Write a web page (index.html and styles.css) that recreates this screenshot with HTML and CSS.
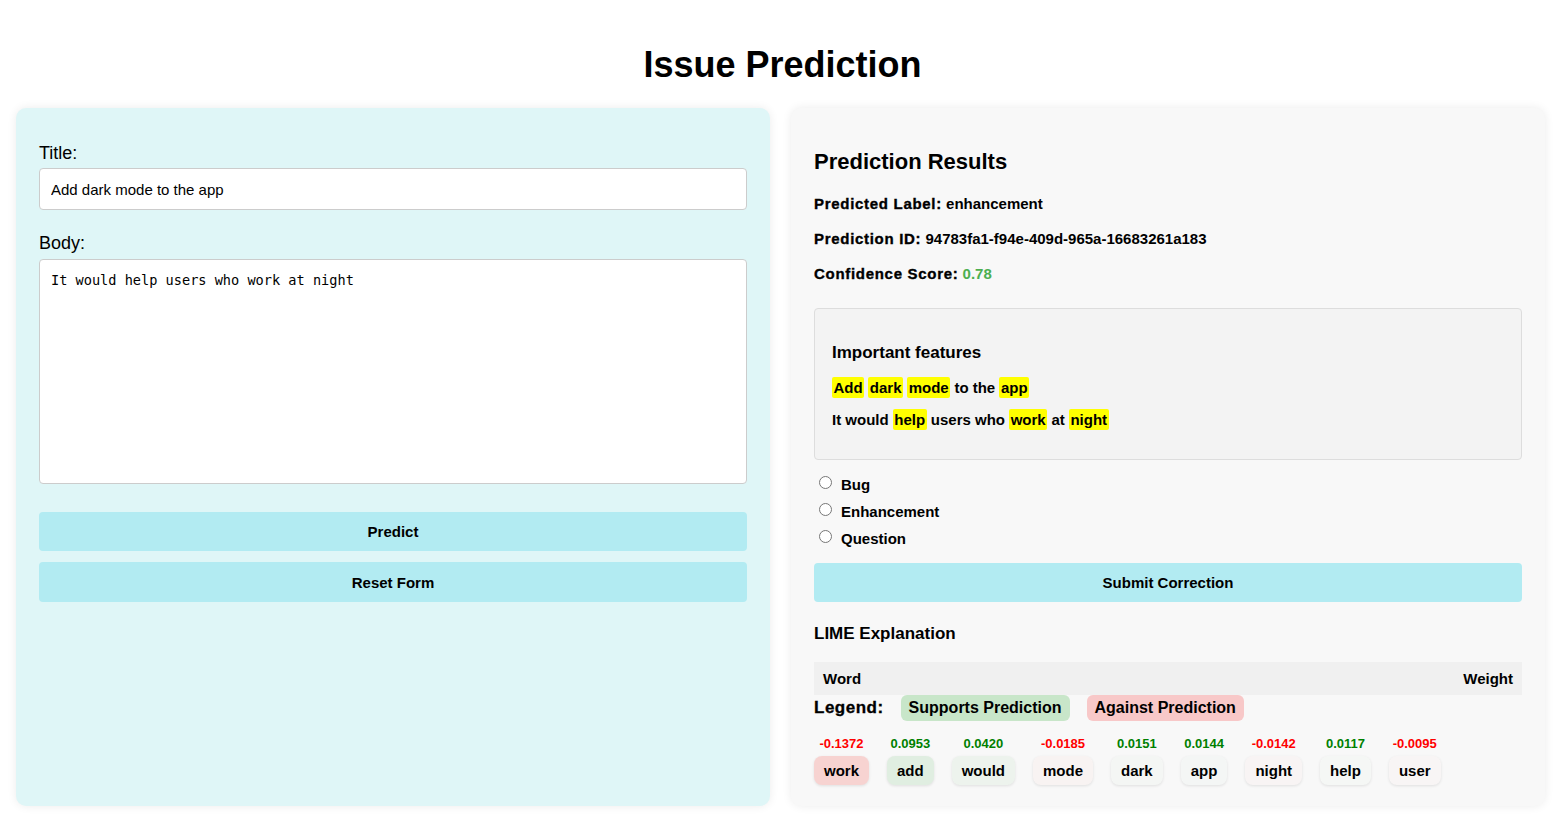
FILE: index.html
```html
<!DOCTYPE html>
<html lang="en">
<head>
<meta charset="utf-8">
<title>Issue Prediction</title>
<link rel="stylesheet" href="styles.css">
</head>
<body>
<h1 class="page-title">Issue Prediction</h1>
<div class="layout">
  <section class="panel panel-form">
    <label class="field-label" for="title">Title:</label>
    <input class="text-input" id="title" type="text" value="Add dark mode to the app">
    <label class="field-label field-label-body" for="body">Body:</label>
    <textarea class="text-area" id="body">It would help users who work at night</textarea>
    <button class="btn btn-predict" type="button">Predict</button>
    <button class="btn btn-reset" type="button">Reset Form</button>
  </section>

  <section class="panel panel-results">
    <h2 class="results-title">Prediction Results</h2>
    <p class="result-line"><strong>Predicted Label:</strong> enhancement</p>
    <p class="result-line"><strong>Prediction ID:</strong> 94783fa1-f94e-409d-965a-16683261a183</p>
    <p class="result-line"><strong>Confidence Score:</strong> <span class="score">0.78</span></p>

    <div class="features">
      <h3 class="features-title">Important features</h3>
      <div class="features-line"><span class="hl">Add</span> <span class="hl">dark</span> <span class="hl">mode</span> to the <span class="hl">app</span></div>
      <div class="features-line features-line-last">It would <span class="hl">help</span> users who <span class="hl">work</span> at <span class="hl">night</span></div>
    </div>

    <div class="radios">
      <label class="radio-row"><input type="radio" name="label" class="radio"> Bug</label>
      <label class="radio-row"><input type="radio" name="label" class="radio"> Enhancement</label>
      <label class="radio-row"><input type="radio" name="label" class="radio"> Question</label>
    </div>

    <button class="btn btn-submit" type="button">Submit Correction</button>

    <h3 class="lime-title">LIME Explanation</h3>
    <div class="lime-header">
      <span>Word</span>
      <span>Weight</span>
    </div>
    <div class="legend">
      <span class="legend-label">Legend:</span>
      <span class="legend-chip legend-support">Supports Prediction</span>
      <span class="legend-chip legend-against">Against Prediction</span>
    </div>

    <div class="words">
      <div class="word"><span class="weight neg">-0.1372</span><span class="word-chip" style="background: rgba(244,67,54,0.2)">work</span></div>
      <div class="word"><span class="weight pos">0.0953</span><span class="word-chip" style="background: rgba(76,175,80,0.139)">add</span></div>
      <div class="word"><span class="weight pos">0.0420</span><span class="word-chip" style="background: rgba(76,175,80,0.061)">would</span></div>
      <div class="word"><span class="weight neg">-0.0185</span><span class="word-chip" style="background: rgba(244,67,54,0.027)">mode</span></div>
      <div class="word"><span class="weight pos">0.0151</span><span class="word-chip" style="background: rgba(76,175,80,0.022)">dark</span></div>
      <div class="word"><span class="weight pos">0.0144</span><span class="word-chip" style="background: rgba(76,175,80,0.021)">app</span></div>
      <div class="word"><span class="weight neg">-0.0142</span><span class="word-chip" style="background: rgba(244,67,54,0.021)">night</span></div>
      <div class="word"><span class="weight pos">0.0117</span><span class="word-chip" style="background: rgba(76,175,80,0.017)">help</span></div>
      <div class="word"><span class="weight neg">-0.0095</span><span class="word-chip" style="background: rgba(244,67,54,0.014)">user</span></div>
    </div>
  </section>
</div>
</body>
</html>
```

FILE: styles.css
```css
* { box-sizing: border-box; }

html, body {
  margin: 0;
  padding: 0;
  background: #ffffff;
  font-family: "Liberation Sans", Arial, sans-serif;
  color: #000;
}

.page-title {
  margin: 44px 0 22px;
  text-align: center;
  font-size: 36px;
  font-weight: bold;
  line-height: 42px;
}

.layout {
  display: grid;
  grid-template-columns: 1fr 1fr;
  gap: 21px;
  padding: 0 20px 0 16px;
  margin-bottom: 19px;
}

.panel {
  border-radius: 10px;
  box-shadow: 0 0 10px rgba(0, 0, 0, 0.08);
}

.panel-form {
  background: #dff6f7;
  padding: 35px 23px 23px;
  display: flex;
  flex-direction: column;
}

.field-label {
  display: block;
  font-size: 18px;
  line-height: 21px;
  margin-bottom: 4px;
}

.field-label-body {
  margin-top: 23px;
  margin-bottom: 5px;
}

.text-input {
  display: block;
  width: 100%;
  height: 42px;
  padding: 0 11px;
  border: 1px solid #ccc;
  border-radius: 4px;
  background: #fff;
  font-family: "Liberation Sans", Arial, sans-serif;
  font-size: 15px;
  color: #000;
}

.text-area {
  display: block;
  width: 100%;
  height: 225px;
  padding: 12px 11px;
  border: 1px solid #ccc;
  border-radius: 4px;
  background: #fff;
  font-family: "DejaVu Sans Mono", monospace;
  font-size: 13.6px;
  line-height: 17px;
  color: #000;
  resize: none;
}

.btn {
  display: block;
  width: 100%;
  border: none;
  border-radius: 4px;
  background: #b2ebf2;
  font-family: "Liberation Sans", Arial, sans-serif;
  font-size: 15px;
  font-weight: bold;
  color: #000;
  cursor: pointer;
}

.btn-predict {
  margin-top: 28px;
  height: 39px;
}

.btn-reset {
  margin-top: 11px;
  height: 40px;
}

.panel-results {
  background: #f8f8f8;
  padding: 25px 23px 21px 23px;
  font-weight: bold;
}

.results-title {
  margin: 16px 0 21px;
  font-size: 22px;
  line-height: 25px;
}

.result-line {
  margin: 18px 0;
  font-size: 15px;
  line-height: 17px;
}

.result-line strong {
  font-weight: 900;
  letter-spacing: 0.7px;
  -webkit-text-stroke: 0.35px #000;
}

.score {
  color: #4caf50;
}

.features {
  margin-top: 26px;
  background: #f3f3f3;
  border: 1px solid #ddd;
  border-radius: 4px;
  padding: 17px 17px;
}

.features-title {
  margin: 17px 0 15px;
  font-size: 17px;
  line-height: 20px;
}

.features-line {
  font-size: 15px;
  line-height: 20px;
  margin-bottom: 12px;
}

.features-line-last {
  margin-bottom: 12px;
}

.hl {
  background: #ffff00;
  padding: 2px 1.5px;
  border-radius: 2px;
}

.radios {
  margin-top: 11px;
  display: flex;
  flex-direction: column;
}

.radio-row {
  display: flex;
  align-items: center;
  height: 27px;
  font-size: 15px;
  gap: 6px;
}

.radio {
  margin: 0 3px 0 5px;
  width: 13px;
  height: 13px;
  position: relative;
  top: -2px;
}

.btn-submit {
  margin-top: 11px;
  height: 39px;
}

.lime-title {
  margin: 22px 0 18px;
  font-size: 17px;
  line-height: 20px;
}

.lime-header {
  display: flex;
  justify-content: space-between;
  align-items: center;
  height: 33px;
  padding: 0 9px;
  background: #f0f0f0;
  font-size: 15px;
}

.legend {
  display: flex;
  align-items: center;
  gap: 17px;
  height: 26px;
}

.legend-label {
  font-size: 17px;
  font-weight: 900;
  letter-spacing: 0.5px;
  -webkit-text-stroke: 0.3px #000;
}

.legend-chip {
  font-size: 16px;
  line-height: 18px;
  padding: 4px 8px;
  border-radius: 6px;
}

.legend-support {
  background: #c8e6c9;
}

.legend-against {
  background: #f8c8c8;
}

.words {
  margin-top: 15px;
  display: flex;
  gap: 18px;
}

.word {
  display: flex;
  flex-direction: column;
  align-items: center;
  gap: 5px;
}

.weight {
  font-size: 13px;
  line-height: 15px;
}

.weight.neg { color: #ff0000; }
.weight.pos { color: #008000; }

.word-chip {
  display: block;
  height: 29px;
  line-height: 29px;
  padding: 0 10px;
  border-radius: 8px;
  font-size: 15px;
  box-shadow: 0 1px 3px rgba(0, 0, 0, 0.1);
}
```
